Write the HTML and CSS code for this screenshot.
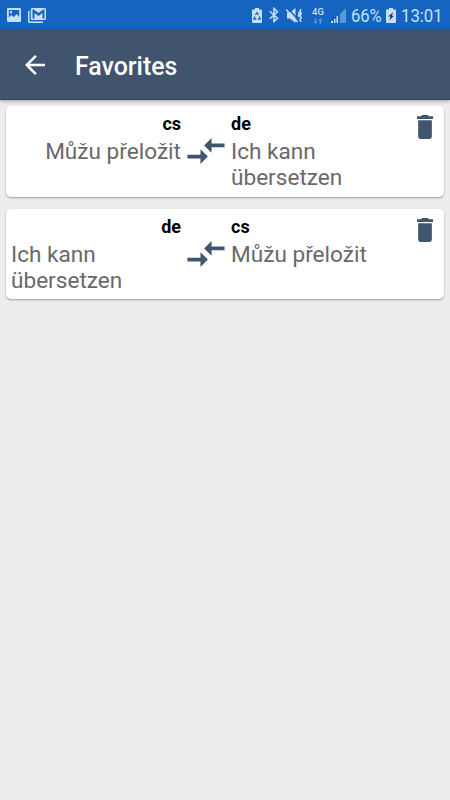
FILE: index.html
```html
<!DOCTYPE html>
<html lang="en">
<head>
<meta charset="utf-8">
<title>Favorites</title>
<link rel="stylesheet" href="styles.css">
</head>
<body>
<svg width="0" height="0" class="defs">
  <symbol id="compare" viewBox="2 5 20 14"><path d="M9.01 14H2v2h7.01v3L13 15l-3.99-4v3zm5.98-1v-3H22V8h-7.01V5L11 9l3.99 4z"/></symbol>
  <symbol id="trash" viewBox="5 3 14 18" preserveAspectRatio="none"><path d="M6 19c0 1.100.9 2 2 2h8c1.100 0 2-.9 2-2V7H6v12zM19 4h-3.500l-1-1h-5l-1 1H5v2h14V4z"/></symbol>
</svg>
<header class="status">
  <svg class="picture" width="14" height="14" viewBox="0 0 14 14"><path fill-rule="evenodd" d="M1.200 0h11.600Q14 0 14 1.200v11.600Q14 14 12.800 14H1.200Q0 14 0 12.800V1.200Q0 0 1.200 0zM1.800 2v7.500l2.500-2.500 2.500 2 3-3 2.400 3V2zM4 3a1.200 1.200 0 1 1 0 2.400A1.200 1.200 0 0 1 4 3z"/></svg>
  <svg class="mail" width="18" height="15" viewBox="0 0 18 15"><path d="M0 3h1.500v10.500H15V15H1.500Q0 15 0 13.500z"/><path fill-rule="evenodd" d="M4 0h12.500Q18 0 18 1.500v9Q18 12 16.500 12H4Q2.800 12 2.800 10.500v-9Q2.800 0 4 0zM4.500 1.500V10.500h2V5l4 3 4-3v5.500h2v-9h-1.300L10.500 5 5.800 1.500z"/></svg>
  <span class="spacer"></span>
  <svg class="saver" width="10" height="15" viewBox="0 0 10 15"><path d="M3 0h4v1.500h2q1 0 1 1V14q0 1-1 1H1q-1 0-1-1V2.500q0-1 1-1h2z"/><path class="cut" d="M3.500 7L5 4.700 6.500 7M7.300 8.500L8 11H6M4.300 11H2l.8-2.500"/></svg>
  <svg class="bluetooth" width="10" height="16" viewBox="0 0 10 16"><path class="line" d="M.8 4.300l7.700 7L5 14.600V1.400l3.500 3.300-7.700 7"/></svg>
  <svg class="mute" width="17" height="15" viewBox="0 0 17 15"><path d="M1 4.500h3L9.500 0v15L4 10.500H1z"/><path class="slash" d="M1.500 0L13 12.500"/><path class="line" d="M0 1.500L11.500 14M12.500 4l1 1.500-1 2 1 1.500M15 1l-1 2.200 1.300 2.200L14 7.500l1.300 2.200L14 12l1 2"/></svg>
  <div class="network"><span>4G</span><svg width="10" height="6" viewBox="0 0 10 6"><path d="M2.500 6L.3 3.500h1.500V0h1.500v3.500h1.500zM7.300 0l2.200 2.500H8V6H6.500V2.500H5z"/></svg></div>
  <svg class="signal" width="15" height="15" viewBox="0 0 15 15"><path class="dim" d="M9 6l6-6v15H9z"/><path d="M0 13h2v2H0zM3 11h1.500v4H3zM5.500 8.500L7 7.500V15H5.500z"/></svg>
  <span class="percent">66%</span>
  <svg class="battery" width="10" height="15" viewBox="0 0 10 15"><path d="M3 0h4v1.500h2q1 0 1 1V14q0 1-1 1H1q-1 0-1-1V2.500q0-1 1-1h2z"/><path class="bolt" d="M7.500 4L2 8.500h2.500L3.300 12.500 8 7.800H5.700z"/></svg>
  <span class="clock">13:01</span>
</header>
<nav class="toolbar">
  <svg width="20" height="20" viewBox="4 4 16 16"><path d="M20 11H7.830l5.590-5.590L12 4l-8 8 8 8 1.410-1.410L7.830 13H20v-2z"/></svg>
  <h1>Favorites</h1>
</nav>
<main>
  <article class="card">
    <div class="side"><b>cs</b><p class="short">Můžu přeložit</p></div>
    <svg class="compare"><use href="#compare"/></svg>
    <div class="side"><b>de</b><p>Ich kann übersetzen</p></div>
    <svg class="trash"><use href="#trash"/></svg>
  </article>
  <article class="card">
    <div class="side"><b>de</b><p>Ich kann übersetzen</p></div>
    <svg class="compare"><use href="#compare"/></svg>
    <div class="side"><b>cs</b><p>Můžu přeložit</p></div>
    <svg class="trash"><use href="#trash"/></svg>
  </article>
</main>
</body>
</html>
```
FILE: styles.css
```css
* { box-sizing: border-box; }
body {
  margin: 0;
  min-height: 800px;
  background: #ededed;
  font-family: Roboto, sans-serif;
}
.defs { position: absolute; }
svg { display: block; flex: none; }
.status {
  display: flex;
  align-items: center;
  height: 30px;
  padding: 0 8px 0 7px;
  background: #1564c0;
  color: #c6e0fa;
  fill: #c6e0fa;
}
.mail { margin-left: 7px; }
.spacer { flex: 1; }
.cut, .line { fill: none; stroke: #c6e0fa; stroke-width: 1.5; }
.cut { stroke: #1564c0; stroke-width: 1.3; }
.slash { stroke: #1564c0; stroke-width: 1.4; }
.bolt { fill: #17385f; }
.dim { fill: #5797dc; }
.bluetooth { margin-left: 7px; }
.mute { margin-left: 7px; }
.network {
  width: 14px;
  margin-left: 9px;
  font-size: 9.5px;
  font-weight: 500;
  line-height: 10px;
}
.network svg { margin: 1px 0 0 1px; fill: #5797dc; }
.signal { margin-left: 5px; }
.percent, .clock {
  font-size: 18px;
  line-height: 30px;
  white-space: nowrap;
  transform-origin: 0 50%;
}
.percent { width: 31px; margin-left: 5px; transform: translateY(1px) scaleX(.92); }
.battery { margin-left: 4px; }
.clock { width: 41px; margin-left: 5px; transform: translateY(1px) scaleX(.93); }
.toolbar {
  position: relative;
  display: flex;
  align-items: center;
  height: 70px;
  padding-left: 25px;
  background: #40556d;
  border-bottom: 1px solid #2b4562;
  box-shadow: 0 1px 4px rgba(0, 0, 0, .35);
  color: #fff;
  fill: #fff;
}
.toolbar h1 {
  margin: 4px 0 0 30px;
  font-size: 24.900px;
  font-weight: 500;
  line-height: 30px;
}
main {
  display: grid;
  gap: 12px;
  padding: 6px;
}
.card {
  display: grid;
  grid-template-columns: 170px 38px 130px 1fr;
  column-gap: 6px;
  height: 90.500px;
  padding: 8px 11px 0 5px;
  background: #fff;
  border-radius: 5px;
  box-shadow: 0 1px 2px rgba(0, 0, 0, .35);
}
.side b {
  display: block;
  font-size: 18px;
  line-height: 20px;
  color: #000;
}
.side:first-child b { text-align: right; }
.side p {
  margin: 5px 0 0;
  font-size: 22.600px;
  line-height: 26px;
  color: #696969;
}
.side:last-of-type p { width: 140px; }
.side .short { text-align: right; }
.compare {
  width: 38px;
  height: 26px;
  margin-top: 24px;
  fill: #40566f;
}
.trash {
  width: 16px;
  height: 24px;
  margin-top: 1px;
  justify-self: end;
  fill: #40566f;
}
```
